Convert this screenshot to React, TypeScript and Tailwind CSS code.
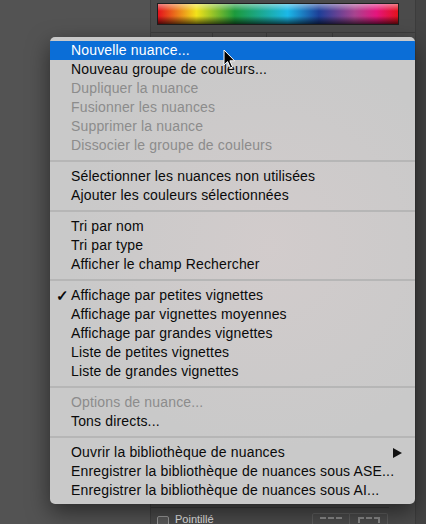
import React from "react";

type Item = {
  label: string;
  disabled?: boolean;
  checked?: boolean;
  active?: boolean;
  submenu?: boolean;
};

const groups: Item[][] = [
  [
    { label: "Nouvelle nuance...", active: true },
    { label: "Nouveau groupe de couleurs..." },
    { label: "Dupliquer la nuance", disabled: true },
    { label: "Fusionner les nuances", disabled: true },
    { label: "Supprimer la nuance", disabled: true },
    { label: "Dissocier le groupe de couleurs", disabled: true },
  ],
  [
    { label: "Sélectionner les nuances non utilisées" },
    { label: "Ajouter les couleurs sélectionnées" },
  ],
  [
    { label: "Tri par nom" },
    { label: "Tri par type" },
    { label: "Afficher le champ Rechercher" },
  ],
  [
    { label: "Affichage par petites vignettes", checked: true },
    { label: "Affichage par vignettes moyennes" },
    { label: "Affichage par grandes vignettes" },
    { label: "Liste de petites vignettes" },
    { label: "Liste de grandes vignettes" },
  ],
  [
    { label: "Options de nuance...", disabled: true },
    { label: "Tons directs..." },
  ],
  [
    { label: "Ouvrir la bibliothèque de nuances", submenu: true },
    { label: "Enregistrer la bibliothèque de nuances sous ASE..." },
    { label: "Enregistrer la bibliothèque de nuances sous AI..." },
  ],
];

const MenuRow = ({ item }: { item: Item }) => {
  const color = item.active
    ? "bg-[#0b6ed7] text-white"
    : item.disabled
      ? "text-[#8c8c8c]"
      : "text-[#0a0a0a]";
  return (
    <div className={`relative flex h-[19px] items-center pl-[21px] pr-[13px] ${color}`}>
      {item.checked && (
        <span className="absolute left-[6px] top-0 text-[15px] font-bold leading-[19px]">✓</span>
      )}
      <span className="flex-1 whitespace-nowrap">{item.label}</span>
      {item.submenu && (
        <svg width="9" height="10" viewBox="0 0 9 10" className="text-[#111]">
          <path d="M0 0 L9 5 L0 10 Z" fill="currentColor" />
        </svg>
      )}
    </div>
  );
};

const Cursor = () => (
  <svg
    width="14"
    height="21"
    viewBox="0 0 14 21"
    className="absolute left-[223px] top-[49px]"
  >
    <path
      d="M1 1 L1 16 L4.6 12.6 L7.4 19 L9.6 18 L6.9 11.8 L11.6 11.8 Z"
      fill="#000"
      stroke="#fff"
      strokeWidth="1"
      strokeLinejoin="round"
    />
  </svg>
);

const App = () => {
  return (
    <div
      className="relative flex h-[524px] w-[426px] overflow-hidden bg-[#535353]"
      style={{ fontFamily: '"Liberation Sans", Arial, sans-serif' }}
    >
      <div className="w-[150px] shrink-0" />

      <div className="flex w-[265px] shrink-0 flex-col border-l border-[#3f3f3f] bg-[#4b4b4b]">
        <div className="h-[33px] border-b border-[#3c3c3c] px-[6px] pt-[3px]">
          <div className="h-[22px] w-[242px] border border-[#1e1e1e] bg-[linear-gradient(to_bottom,rgba(255,255,255,0.45),rgba(255,255,255,0)_35%,rgba(0,0,0,0)_60%,rgba(0,0,0,0.65)),linear-gradient(to_right,#e3121c,#f2e21a_16%,#1c9a3c_32%,#1bb8e8_54%,#1d3f98_67%,#a8448f_82%,#e4157d_91%,#e3121c)]" />
        </div>
        <div className="flex h-[10px] border-b border-[#3c3c3c]">
          <div className="w-[62px] border-r border-[#3c3c3c]" />
          <div className="w-[54px] border-r border-[#3c3c3c]" />
          <div className="w-[66px] border-r border-[#3c3c3c]" />
        </div>
        <div className="flex-1" />
        <div className="mr-[26px] border-b border-[#3c3c3c]" />
        <div className="flex h-[16px] items-start pt-[5px]">
          <div className="ml-[6px] mt-[3px] h-[12px] w-[12px] rounded-[2px] border border-[#9a9a9a] bg-[#5a5a5a]" />
          <span className="ml-[6px] text-[11px] leading-[12px] text-[#e6e6e6]">Pointillé</span>
          <div className="ml-auto mr-[27px] flex h-[16px]">
            <div className="flex w-[38px] items-start justify-center rounded-l-[2px] border border-[#5e5e5e] pt-[3px]">
              <div className="h-[2px] w-[22px] border-t-2 border-dashed border-[#8a8a8a]" />
            </div>
            <div className="flex w-[38px] items-start justify-center rounded-r-[2px] border border-l-0 border-[#5e5e5e] pt-[3px]">
              <div className="h-[6px] w-[22px] border-l-2 border-r-2 border-t-2 border-dashed border-[#8a8a8a]" />
            </div>
          </div>
        </div>
      </div>

      <div className="flex-1 border-l border-[#3c3c3c] bg-[#444]" />

      <div className="absolute left-[50px] top-[37px] w-[365px] overflow-hidden rounded-[5px] bg-[#c9c9c9] py-[4px] text-[14px] tracking-[0.16px] shadow-[0_8px_22px_rgba(0,0,0,0.5)]">
        <div className="pointer-events-none absolute inset-0 bg-[radial-gradient(circle_at_60%_45%,rgba(214,205,205,0.7),rgba(201,201,201,0)_60%)]" />
        <div className="relative">
          {groups.map((group, gi) => (
            <div key={gi}>
              {gi > 0 && (
                <div className="flex h-[12px] items-center">
                  <div className="h-[2px] w-full bg-[#b6b6b6]" />
                </div>
              )}
              {group.map((item) => (
                <MenuRow key={item.label} item={item} />
              ))}
            </div>
          ))}
        </div>
      </div>

      <Cursor />
    </div>
  );
};

export default App;
